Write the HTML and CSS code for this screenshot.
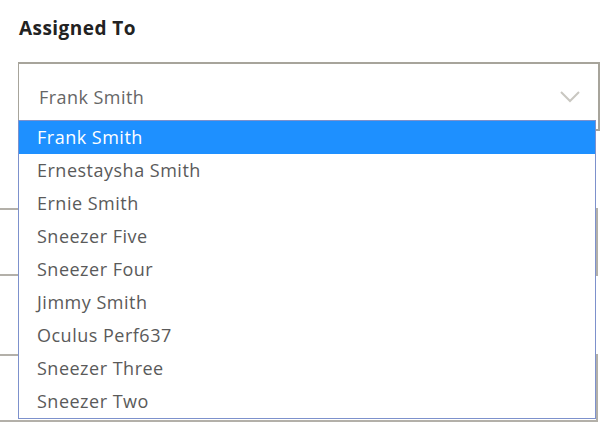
FILE: index.html
```html
<!DOCTYPE html>
<html>
<head>
<meta charset="utf-8">
<link rel="stylesheet" href="styles.css">
</head>
<body>
<div class="form">
  <div class="field">
    <div class="label">Assigned To</div>
    <div class="select">
      <span class="value">Frank Smith</span>
      <svg class="chev" width="20" height="12" viewBox="0 0 20 12"><path d="M1 1 L10 10 L19 1" fill="none" stroke="#c9c7c1" stroke-width="2"/></svg>
    </div>
    <ul class="dropdown">
      <li class="opt active">Frank Smith</li>
      <li class="opt">Ernestaysha Smith</li>
      <li class="opt">Ernie Smith</li>
      <li class="opt">Sneezer Five</li>
      <li class="opt">Sneezer Four</li>
      <li class="opt">Jimmy Smith</li>
      <li class="opt">Oculus Perf637</li>
      <li class="opt">Sneezer Three</li>
      <li class="opt">Sneezer Two</li>
    </ul>
  </div>
  <div class="field under">
    <div class="box"></div>
  </div>
  <div class="field under">
    <div class="box"></div>
  </div>
</div>
</body>
</html>
```
FILE: styles.css
```css
html, body {
  margin: 0;
  padding: 0;
  background: #fff;
}
body {
  font-family: "Open Sans", "Noto Sans", sans-serif;
  width: 607px;
  height: 431px;
  overflow: hidden;
}
.form {
  padding: 15px 0 0 18px;
  width: 580px;
}
.field {
  position: relative;
}
.label {
  font-weight: 700;
  font-size: 19px;
  color: #222;
  line-height: 26px;
  padding-left: 1px;
  margin-bottom: 21px;
  letter-spacing: 0.45px;
}
.select {
  height: 65px;
  border: 2px solid #a7a49b;
  border-left-width: 1px;
  display: flex;
  align-items: center;
  justify-content: space-between;
  padding: 0 18px 0 20px;
  box-sizing: content-box;
  width: 541px;
}
.value {
  font-size: 18px;
  color: #666;
  letter-spacing: 0.45px;
}
.chev {
  display: block;
}
.dropdown {
  position: absolute;
  left: 0;
  top: 105px;
  width: 576px;
  margin: 0;
  padding: 0;
  list-style: none;
  border: 1px solid #7d91cc;
  background: #fff;
  z-index: 2;
}
.opt {
  height: 33px;
  line-height: 33px;
  padding-left: 18px;
  font-size: 18px;
  color: #5a5a5a;
  letter-spacing: 0.5px;
}
.opt.active {
  background: #1e90ff;
  color: #fff;
}
.under {
  margin-top: 77px;
  margin-left: -20px;
}
.under + .under {
  margin-top: 78px;
}
.box {
  height: 64px;
  border: 2px solid #b3b0a9;
  border-left: none;
  width: 598px;
}
```
